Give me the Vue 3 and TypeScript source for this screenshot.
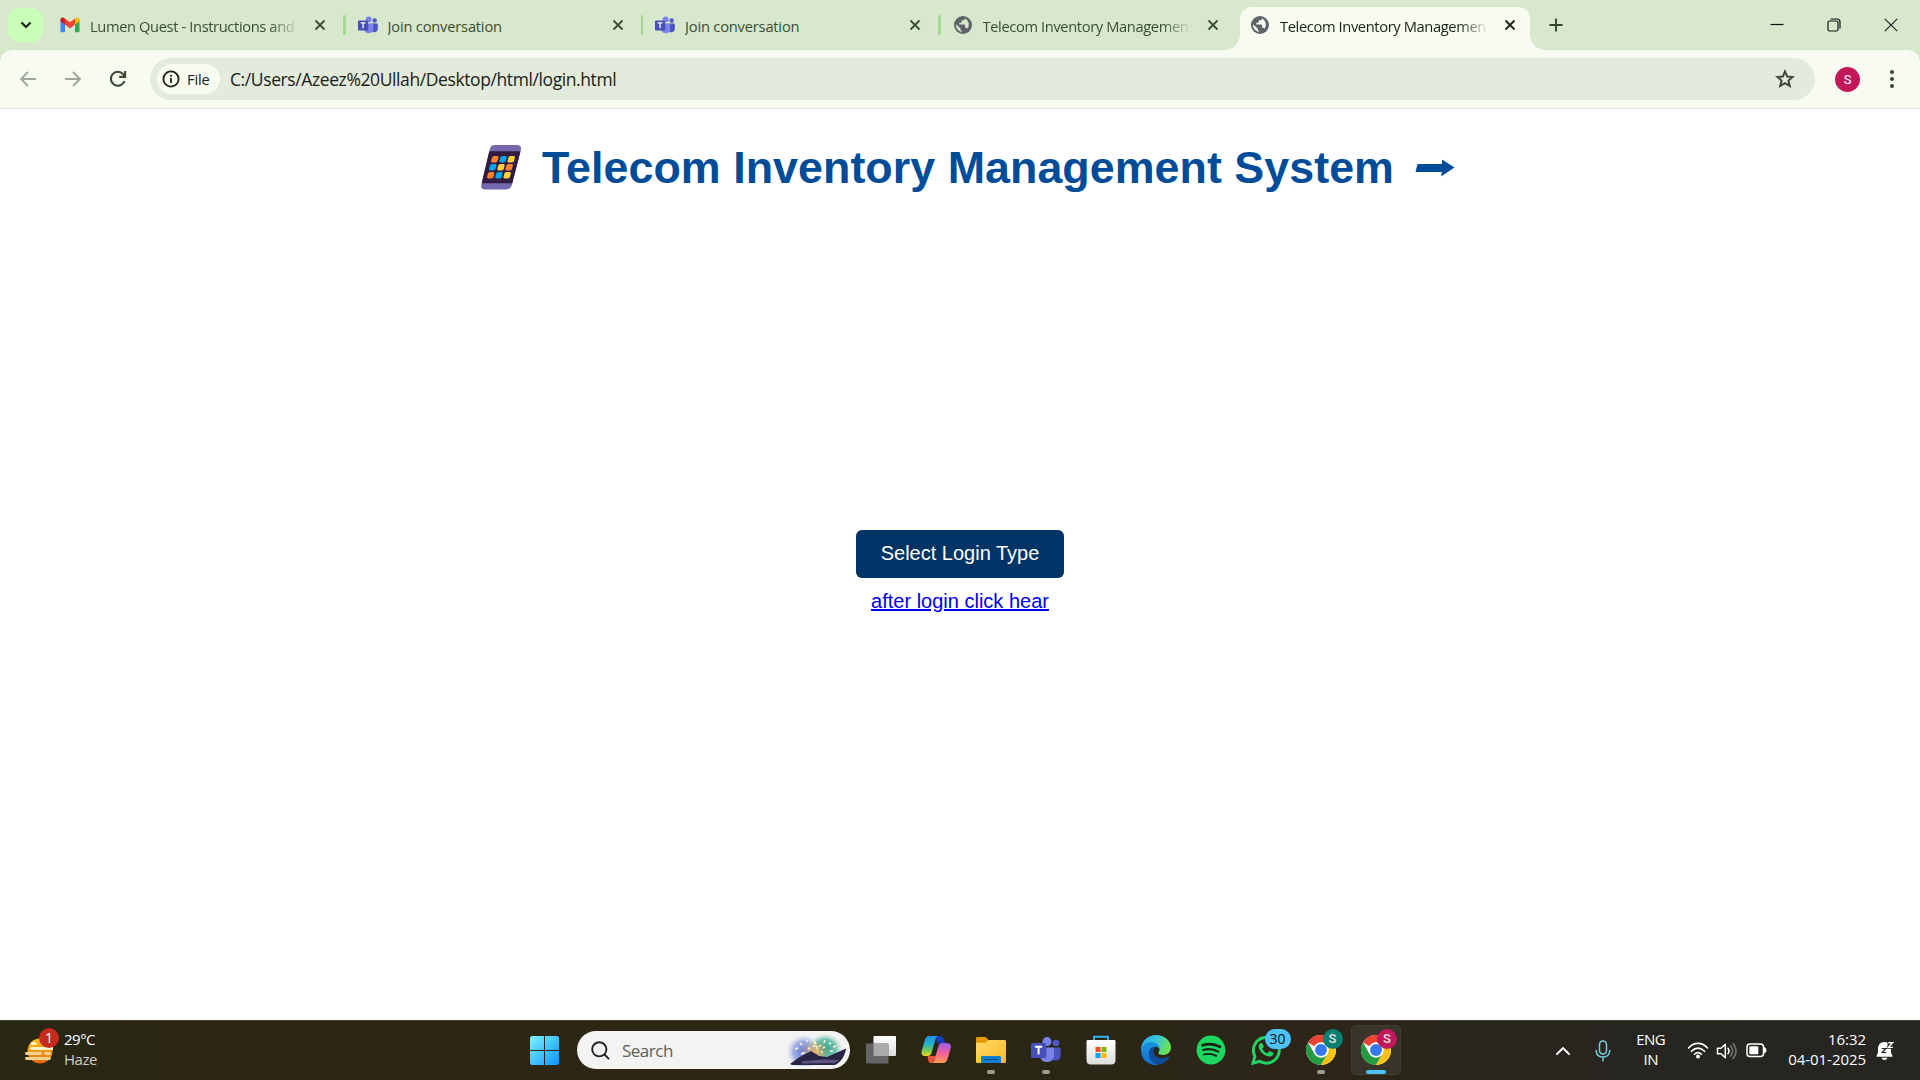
<script setup lang="ts">
interface Tab {
  title: string
  icon: 'gmail' | 'teams' | 'globe'
  active?: boolean
  separator?: boolean
  faded?: boolean
}

const tabs: Tab[] = [
  { title: 'Lumen Quest - Instructions and', icon: 'gmail', separator: true, faded: true },
  { title: 'Join conversation', icon: 'teams', separator: true },
  { title: 'Join conversation', icon: 'teams', separator: true },
  { title: 'Telecom Inventory Managemen', icon: 'globe', faded: true },
  { title: 'Telecom Inventory Managemen', icon: 'globe', active: true, faded: true },
]

const dialTiles = ['o', 'b', 'y', 'b', 'y', 'o', 'o', 'b', 'y']
const tileColours: Record<string, string> = { o: '#ff822d', b: '#00a6ed', y: '#ffd03b' }

const chromeWindows = [
  { badge: '#0b7f72', active: false },
  { badge: '#c2185b', active: true },
]
</script>

<template>
  <div class="screen">
    <svg class="defs" width="0" height="0">
      <defs>
        <linearGradient id="win" x1="0" y1="0" x2="1" y2="1">
          <stop offset="0" stop-color="#7df3ff" /><stop offset="1" stop-color="#0a94ff" />
        </linearGradient>
        <linearGradient id="sun" x1="0" y1="0" x2="0" y2="1">
          <stop offset="0" stop-color="#ffc61a" /><stop offset="1" stop-color="#e9650f" />
        </linearGradient>
        <linearGradient id="copA" x1="0" y1="0" x2="0" y2="1">
          <stop offset="0" stop-color="#1e8fec" /><stop offset=".4" stop-color="#23b3c7" />
          <stop offset=".75" stop-color="#7cc84a" /><stop offset="1" stop-color="#f7d21c" />
        </linearGradient>
        <linearGradient id="copB" x1="0" y1="0" x2="0" y2="1">
          <stop offset="0" stop-color="#a259ee" /><stop offset=".5" stop-color="#f0609c" /><stop offset="1" stop-color="#ff9d55" />
        </linearGradient>
        <linearGradient id="fold" x1="0" y1="0" x2="1" y2="1">
          <stop offset="0" stop-color="#ffda67" /><stop offset="1" stop-color="#fbb929" />
        </linearGradient>
        <linearGradient id="bag" x1="0" y1="0" x2="0" y2="1">
          <stop offset="0" stop-color="#fff" /><stop offset="1" stop-color="#dcdcdc" />
        </linearGradient>
        <linearGradient id="edgeTop" x1="0" y1="0" x2="1" y2=".35">
          <stop offset="0" stop-color="#2aa9e6" /><stop offset=".5" stop-color="#35c1e0" /><stop offset="1" stop-color="#6be255" />
        </linearGradient>
        <linearGradient id="edgeLow" x1="0" y1="0" x2="0" y2="1">
          <stop offset="0" stop-color="#1a93e0" /><stop offset="1" stop-color="#0f6fd0" />
        </linearGradient>
        <radialGradient id="glowA"><stop offset="0" stop-color="#5c75d6" /><stop offset=".6" stop-color="#8d9ee0" stop-opacity=".8" /><stop offset="1" stop-color="#cdd4f0" stop-opacity="0" /></radialGradient>
        <radialGradient id="glowB"><stop offset="0" stop-color="#2fa58c" /><stop offset=".6" stop-color="#58b9a4" stop-opacity=".85" /><stop offset="1" stop-color="#c9e6df" stop-opacity="0" /></radialGradient>
        <radialGradient id="glowC"><stop offset="0" stop-color="#f3b06a" /><stop offset="1" stop-color="#d99b6a" stop-opacity="0" /></radialGradient>
        <symbol id="teams" viewBox="0 0 30 27">
          <circle cx="25" cy="6" r="3.3" fill="#5059c9" />
          <path d="M20 10.500h8.200a1.500 1.500 0 0 1 1.500 1.500v6.500c0 3-2 5-5 5h-3z" fill="#4b53bc" />
          <circle cx="16" cy="4.600" r="4.500" fill="#7b83eb" />
          <path d="M9 10.500h12.500a1.500 1.500 0 0 1 1.500 1.500v7.500a7.200 7.200 0 0 1-14 0z" fill="#7b83eb" />
          <path d="M9 10.500h7v11H9.200z" fill="#000" opacity=".15" />
          <rect x="0" y="6" width="15" height="15" rx="1.500" fill="#464eb8" />
          <path d="M4 9.700h7.200M7.600 9.700V17.500" stroke="#fff" stroke-width="1.900" />
        </symbol>
        <symbol id="chrome" viewBox="0 0 48 48">
          <circle cx="24" cy="24" r="24" fill="#fff" />
          <path d="M3.200 12A24 24 0 0 1 44.800 12H24A12 12 0 0 0 13.600 18z" fill="#e94335" />
          <path d="M3.200 12A24 24 0 0 0 24 48L34.400 30A12 12 0 0 1 13.600 30z" fill="#249a41" />
          <path d="M44.800 12A24 24 0 0 1 24 48L34.400 30A12 12 0 0 0 24 12z" fill="#fbc116" />
          <circle cx="24" cy="24" r="12" fill="#fff" />
          <circle cx="24" cy="24" r="9.500" fill="#3478ec" />
        </symbol>
      </defs>
    </svg>

    <header class="tabstrip">
      <button class="tab-search">
        <svg width="12" height="8" viewBox="0 0 12 8"><path d="M1.500 1.500 6 6l4.500-4.500" fill="none" stroke="#12210d" stroke-width="2.200" /></svg>
      </button>
      <div class="tabs">
        <div v-for="(tab, i) in tabs" :key="i" class="tab" :class="{ active: tab.active }">
          <svg v-if="tab.icon === 'gmail'" class="favicon" viewBox="0 0 20 20">
            <path d="M.5 4.500v11.500c0 .8.500 1.300 1.300 1.300H5V8z" fill="#4285f4" />
            <path d="M19.500 4.500v11.500c0 .8-.5 1.300-1.300 1.300H15V8z" fill="#34a853" />
            <path d="M15 4.600v5l4.500-3V4.700c0-2-2.500-2.900-4.100-1.700z" fill="#fbbc04" />
            <path d="M5 4.600v5L.5 6.600V4.700C.5 2.700 3 1.800 4.600 3z" fill="#c5221f" />
            <path d="M5 3.500 10 7.300l5-3.800v6.100l-5 3.800-5-3.800z" fill="#ea4335" />
          </svg>
          <svg v-else-if="tab.icon === 'teams'" class="favicon"><use href="#teams" y="0.500" /></svg>
          <svg v-else class="favicon" viewBox="0 0 20 20">
            <circle cx="10" cy="10" r="9" fill="#5f6368" />
            <path d="M3 9.200 7.600 13.500v1c0 .8.600 1.400 1.400 1.400v1.200A7.200 7.200 0 0 1 3 9.200zM12 3.200v.5c0 .9-.8 1.500-1.600 1.500H8.800v1.600c0 .5-.4.900-.9.900H6.300v1.700h4.900c.5 0 .9.400.9.800v2.500h.9c.7 0 1.300.5 1.500 1.100A7.300 7.300 0 0 0 12 3.200z" :fill="tab.active ? '#f8fbf2' : '#d8e8cd'" />
          </svg>
          <span class="tab-title" :class="{ faded: tab.faded }">{{ tab.title }}</span>
          <svg class="tab-close" width="12" height="12" viewBox="0 0 12 12"><path d="M1.500 1.500 10.500 10.500M10.500 1.500 1.500 10.500" stroke="currentColor" stroke-width="1.800" /></svg>
          <i v-if="tab.separator" class="separator" />
        </div>
      </div>
      <svg class="new-tab" width="14" height="14" viewBox="0 0 14 14"><path d="M7 .5v13M.5 7h13" stroke="#33452c" stroke-width="1.900" /></svg>
      <div class="window-controls">
        <svg width="14" height="14" viewBox="0 0 14 14"><path d="M.5 6.500h13" stroke="#111" stroke-width="1.200" /></svg>
        <svg width="14" height="14" viewBox="0 0 14 14" fill="none" stroke="#111" stroke-width="1.200"><rect x="1" y="3" width="10" height="10" rx="1.500" /><path d="M3.500 1H10a3 3 0 0 1 3 3v6.500" /></svg>
        <svg width="14" height="14" viewBox="0 0 14 14"><path d="M.8.800 13.200 13.200M13.200.800.800 13.200" stroke="#222" stroke-width="1.200" /></svg>
      </div>
    </header>

    <nav class="toolbar">
      <svg class="nav-icon" viewBox="0 0 20 20" fill="none" stroke="#9fa79a" stroke-width="1.900"><path d="M18 10H3.500M10 3 3 10l7 7" /></svg>
      <svg class="nav-icon" viewBox="0 0 20 20" fill="none" stroke="#9fa79a" stroke-width="1.900"><path d="M2 10h14.500M10 3l7 7-7 7" /></svg>
      <svg class="nav-icon" viewBox="0 0 20 20" fill="none" stroke="#374831" stroke-width="2.100"><path d="M16.500 12A7 7 0 1 1 15.200 5.200L17 7.500" /><path d="M17.100 2V7.900H11.200" /></svg>
      <div class="omnibox">
        <span class="chip">
          <svg width="18" height="18" viewBox="0 0 18 18"><circle cx="9" cy="9" r="7.600" fill="none" stroke="#1b2118" stroke-width="1.800" /><path d="M9 8v5M9 4.800v1.900" stroke="#1b2118" stroke-width="1.800" /></svg>
          <b>File</b>
        </span>
        <span class="url">C:/Users/Azeez%20Ullah/Desktop/html/login.html</span>
        <svg class="star" width="20" height="20" viewBox="0 0 20 20"><path d="M10 2.400l2.150 5.100 5.500.45-4.200 3.600 1.300 5.400L10 14.050 5.250 16.950l1.300-5.400-4.200-3.600 5.500-.45z" fill="none" stroke="#3f4a3b" stroke-width="2" /></svg>
      </div>
      <span class="avatar">S</span>
      <svg class="menu" width="6" height="20" viewBox="0 0 6 20" fill="#33452c"><circle cx="3" cy="3" r="2" /><circle cx="3" cy="10" r="2" /><circle cx="3" cy="17" r="2" /></svg>
    </nav>

    <main class="page">
      <h1>
        <svg width="42" height="46" viewBox="0 0 42 46">
          <path d="M14.500 1H37c3 0 4.600 2 3.900 4.600L31.800 41c-.8 3-3 4.500-5.800 4.500H4.500C2 45.500.6 43.600 1.300 41L9.800 5.200C10.500 2.600 12 1 14.500 1z" fill="#7668ac" />
          <path d="M9.300 7.200H40.500L32.300 39.300H1.700z" fill="#321b41" />
          <g transform="matrix(1 0 -.255 1 11.400 12)">
            <rect v-for="(c, i) in dialTiles" :key="i" :x="1 + (i % 3) * 8.200" :y="Math.floor(i / 3) * 8" width="6.500" height="6.500" rx="1.700" :fill="tileColours[c]" />
          </g>
        </svg>
        <span class="heading-text">Telecom Inventory Management System</span>
        <svg class="arrow" width="40" height="18" viewBox="0 0 40 18"><path d="M2.500 5H27V.5L39.500 8.500 26 17.500 27 13H.5z" fill="#004c99" /></svg>
      </h1>
      <section class="login">
        <button class="login-button">Select Login Type</button>
        <a href="#" class="login-link">after login click hear</a>
      </section>
    </main>

    <footer class="taskbar">
      <div class="weather">
        <div class="weather-icon">
          <svg width="28" height="28" viewBox="0 0 28 28">
            <circle cx="15" cy="14" r="12.500" fill="url(#sun)" />
            <g stroke="#fff1c4" stroke-width="2.900" stroke-linecap="round"><path d="M7 6.500h3M6.500 11.500h22" /><path d="M1.500 16.500h14M20.500 16.500h4M1.500 21.500h23" stroke="#f1d392" /></g>
          </svg>
          <span class="alert">1</span>
        </div>
        <div class="weather-text"><span>29°C</span><span class="dim">Haze</span></div>
      </div>

      <div class="apps">
        <svg class="start" width="29" height="29" viewBox="0 0 29 29"><path d="M1.500 0H14v14H0V1.500zM15 0h12.500L29 1.500V14H15zM0 15h14v14H1.500L0 27.500zM15 15h14v12.500L27.500 29H15z" fill="url(#win)" /></svg>
        <div class="search">
          <svg width="19" height="19" viewBox="0 0 19 19" fill="none" stroke="#222" stroke-width="1.900" stroke-linecap="round"><circle cx="8.300" cy="8.300" r="7.100" /><path d="M13.500 13.500 17.600 17.600" /></svg>
          <span>Search</span>
          <svg class="highlight" width="60" height="32" viewBox="0 0 60 32">
            <ellipse cx="17" cy="18" rx="18" ry="18" fill="url(#glowA)" />
            <ellipse cx="38" cy="15" rx="18" ry="16" fill="url(#glowB)" />
            <ellipse cx="28" cy="18" rx="15" ry="12" fill="url(#glowC)" />
            <path d="M3 30 11 24 24 17l8 5 8 1L59 14.500C58 22 54 28 48 31H5z" fill="#292344" />
            <path d="M14 27.500 35 25.500l17 .5-4 3-32 .5z" fill="#766a98" opacity=".7" />
            <path d="M8 15l3-1M14 20l4-1.500M13 9l2 2M20 6v2M28 7l1 3M38 6l-1 3M44 9l-2 1M49 12l-3 1M43 17h3M21 14l2 1M38 13l-2 1M35 17v2" stroke="#fff9d5" stroke-width="1.400" />
            <path d="M26 6l2 5 2 2 1 5M26 12l4 1 5-2" stroke="#fff2ba" stroke-width="1.500" stroke-dasharray="2 1" fill="none" />
          </svg>
        </div>

        <div class="app">
          <svg width="30" height="30" viewBox="0 0 30 30"><rect x="7.500" y="1" width="22.500" height="20" rx="1" fill="url(#bag)" /><rect x="0" y="8.500" width="22.500" height="20" rx="1" fill="#646464" /><path d="M7.500 8.500h15V21h-15z" fill="#aaa" /></svg>
        </div>
        <div class="app">
          <svg width="30" height="30" viewBox="0 0 30 30">
            <path d="M15 1h4.500c1.500 0 2.300.8 2.800 2.200L24 8h-8z" fill="#153ec0" />
            <path d="M6.500 21H15l-3 5.500c-.5 1-1.100 1.500-2.200 1.500-1.400 0-2-.7-2.400-2z" fill="#e6563d" />
            <path d="M8 1h9.500C15 1.500 14.500 4 13.800 6.500L10.500 18c-.7 2.200-1.800 3-3.800 3H4C.8 21 0 18.500.8 15.500L4 4.800C4.800 2.200 5.800 1 8 1z" fill="url(#copA)" />
            <path d="M22 28H10c2.500-.5 3-2 3.800-4.500L17.500 11c.7-2.200 1.800-3 3.800-3H26c3.500 0 4.500 2.500 3.600 5.500L26.500 24c-.8 2.700-2.300 4-4.500 4z" fill="url(#copB)" />
          </svg>
        </div>
        <div class="app">
          <svg width="30" height="30" viewBox="0 0 30 30"><path d="M0 3.500C0 2.500.7 2 1.500 2h7.300c.7 0 1.200.2 1.700.7L12.500 5v5H0z" fill="#e29a09" /><path d="M0 7.800h9.500L12.500 5h16c.9 0 1.500.6 1.500 1.500v20c0 1-.6 1.500-1.500 1.500h-27C.6 28 0 27.500 0 26.500z" fill="url(#fold)" /><path d="M5 28v-5.500C5 21.500 5.700 21 6.500 21h17c.9 0 1.500.6 1.500 1.500V28z" fill="#117ed0" /><path d="M8.500 24.500h13" stroke="#07548f" stroke-width="1.200" /></svg>
          <i class="running" />
        </div>
        <div class="app">
          <svg width="30" height="27"><use href="#teams" /></svg>
          <i class="running" />
        </div>
        <div class="app">
          <svg width="30" height="30" viewBox="0 0 30 30"><path d="M8 6V1.700h14V6" fill="none" stroke="#30b4ea" stroke-width="1.900" /><path d="M.5 6.500c0-1 .5-1.500 1.300-1.500h26.400c.8 0 1.300.5 1.300 1.500V25c0 3-1.500 4.500-4.300 4.500H4.800C2 29.500.5 28 .5 25z" fill="url(#bag)" /><rect x="9.500" y="12" width="5" height="5" fill="#f25022" /><rect x="15.500" y="12" width="5" height="5" fill="#7fba00" /><rect x="9.500" y="18" width="5" height="5" fill="#00a4ef" /><rect x="15.500" y="18" width="5" height="5" fill="#ffb900" /></svg>
        </div>
        <div class="app">
          <svg width="30" height="30" viewBox="0 0 30 30">
            <path d="M0 15C0 6.500 6.500 0 15 0s15 6 15 12.500c0 4.500-3.500 7.500-8 7.500-3 0-4.700-1-4.700-2 0-.8 1.200-1.200 1.200-3.500 0-3-3.200-5.500-7.500-5.500C5.500 9 1 12 0 15z" fill="url(#edgeTop)" />
            <path d="M0 15c.5-5 5-8 10.500-8 4.500 0 8 2.500 8 7-1-1.800-2.800-2.500-4.800-2.300C9.500 12 7.500 16 8.500 20.500 9.500 25 13 28.500 17.500 29.800 8 31.500 0 24.500 0 15z" fill="url(#edgeLow)" />
            <path d="M12.500 12c-5 2.500-6 8-3 12.700 2.500 4 6.500 5.600 10.500 4.500 3.500-1 6.500-3.500 8-6.200.5-.9-.3-1.400-1.100-1-5.500 2.500-14 1-14.400-5.300-.1-2 .7-3.300 2-4.500-.7-.3-1.300-.4-2-.2z" fill="#0d4d99" />
          </svg>
        </div>
        <div class="app">
          <svg width="30" height="30" viewBox="0 0 30 30"><circle cx="15" cy="15" r="14.400" fill="#1ed760" /><g fill="none" stroke="#17200f" stroke-linecap="round"><path d="M6.500 10.200c6-1.700 12.500-1.200 17.500 1.700" stroke-width="2.700" /><path d="M7.200 15c5.200-1.400 10.700-.8 15 1.600" stroke-width="2.200" /><path d="M7.800 19.500c4.300-1.100 9-.6 12.500 1.400" stroke-width="1.800" /></g></svg>
        </div>
        <div class="app">
          <svg width="30" height="30" viewBox="0 0 30 30"><path d="M2 28.200 3.900 21.200A12.900 12.900 0 1 1 8.700 26.300z" fill="none" stroke="#24d366" stroke-width="2.900" /><path d="M9.300 8.300c.5-.5 1.700-.6 2.100.2l1.200 2.800c.2.600-.1 1.100-1.300 2.400 1.200 2.300 2.900 3.800 5.100 4.700l1.500-1.800c.4-.5.800-.5 1.300-.3l2.700 1.300c.7.400.6.900.4 1.700-.6 1.700-2.700 2.500-4.300 2.200-4.900-.9-8.600-4.200-10.100-8.500-.6-1.700.2-3.700 1.400-4.700z" fill="#24d366" /></svg>
          <span class="count">30</span>
        </div>
        <div v-for="(win, i) in chromeWindows" :key="i" class="app" :class="{ focused: win.active }">
          <svg width="30" height="30"><use href="#chrome" /></svg>
          <span class="profile" :style="{ background: win.badge }">S</span>
          <i class="running" />
        </div>
      </div>

      <div class="tray">
        <svg width="14" height="9" viewBox="0 0 14 9"><path d="M1 8 7 2l6 6" fill="none" stroke="#fff" stroke-width="1.900" stroke-linecap="round" /></svg>
        <svg class="mic" width="16" height="22" viewBox="0 0 16 22" fill="none" stroke="#75cfe0" stroke-width="1.500" stroke-linecap="round"><rect x="4.500" y="1" width="7" height="13" rx="3.500" /><path d="M1.200 10.500c0 4 2.600 6.500 6.800 6.500s6.800-2.500 6.800-6.500M8 17v4" /></svg>
        <div class="lang"><span>ENG</span><span>IN</span></div>
        <svg class="wifi" width="22" height="17" viewBox="0 0 22 17" fill="none" stroke="#fff" stroke-width="1.600" stroke-linecap="round"><path d="M1.500 6C7-.2 15-.2 20.500 6M4.500 9.300c4-4.200 9-4.200 13 0M7.500 12.300c2.300-2.300 4.700-2.300 7 0" /><circle cx="11" cy="14.500" r="1.200" fill="#fff" /></svg>
        <svg class="sound" width="22" height="18" viewBox="0 0 22 18" fill="none" stroke="#fff" stroke-width="1.500" stroke-linejoin="round" stroke-linecap="round"><path d="M1.500 6.200H5l4.300-4v13.600L5 11.800H1.500zM12 6.200c1.300 1.700 1.300 3.900 0 5.600" /><path d="M14.500 3.800c2.800 3 2.800 7.400 0 10.400M17 1.500c4 4.300 4 10.700 0 15" stroke="#77756f" /></svg>
        <svg class="battery" width="21" height="15" viewBox="0 0 21 15"><rect x="1" y="1" width="16.500" height="12.500" rx="3" fill="none" stroke="#fff" stroke-width="1.500" /><rect x="3.300" y="3.300" width="9" height="8" rx="1" fill="#fff" /><path d="M18.500 4.500c2 .3 2 5 0 5.500z" fill="#fff" stroke="#fff" /></svg>
        <div class="clock"><span>16:32</span><span>04-01-2025</span></div>
        <svg class="bell" width="18" height="20" viewBox="0 0 18 20"><path d="M.5 15.200c0-.5.200-.8.400-1.200L2 11.500V7.600C2 3.800 4.700 1 8.500 1c1 0 2 .2 3 .6v4.900h3.500v5l1.100 2.500c.2.400.4.700.4 1.200 0 .4-.3.600-.7.600H1.200c-.4 0-.7-.2-.7-.6zM5.700 16.800h5.600c-.4 3-5.200 3-5.600 0z" fill="#fff" /><path d="M5.800 7.500h4L6.200 11.500h4.200" fill="none" stroke="#26241f" stroke-width="1.200" /><path d="M12.300 1.800h4.200l-4 4.600h4.500" fill="none" stroke="#26241f" stroke-width="2.600" /><path d="M12.300 1.800h4.200l-4 4.600h4.500" fill="none" stroke="#fff" stroke-width="1.400" /></svg>
      </div>
    </footer>
  </div>
</template>

<style>
body {
  overflow: hidden;
}
</style>

<style scoped>
.screen {
  display: flex;
  flex-direction: column;
  width: 1920px;
  height: 1080px;
  overflow: hidden;
  background: #fff;
  font-family: "Open Sans", "Noto Sans", sans-serif;
}
.screen * { box-sizing: border-box; }
.defs { position: absolute; }
svg { display: block; flex: none; }

.tabstrip {
  display: flex;
  flex: none;
  align-items: center;
  height: 50px;
  background: #d8e8cd;
}
.tab-search {
  display: grid;
  place-items: center;
  width: 35px;
  height: 34px;
  margin-left: 8px;
  padding: 0;
  border: 0;
  border-radius: 12px;
  background: #c9ffb8;
}
.tabs {
  display: flex;
  align-self: stretch;
  margin-left: 5px;
}
.tab {
  position: relative;
  display: flex;
  align-items: center;
  width: 297.500px;
  height: 50px;
  padding-left: 12px;
  color: #3b4e33;
}
.favicon { width: 20px; height: 20px; }
.tab-title {
  width: 209px;
  margin-left: 10px;
  padding-top: 1px;
  overflow: hidden;
  white-space: nowrap;
  font-size: 14.700px;
  letter-spacing: -0.2px;
  line-height: 20px;
}
.tab-title.faded {
  letter-spacing: -0.38px;
  -webkit-mask-image: linear-gradient(to right, #000 86%, transparent);
  mask-image: linear-gradient(to right, #000 86%, transparent);
}
.tab-close { margin-left: 15px; }
.separator {
  position: absolute;
  right: 0;
  top: 15px;
  width: 2.500px;
  height: 20px;
  border-radius: 2px;
  background: #a3d895;
}
.tab.active {
  width: 290px;
  height: 43px;
  margin-top: 7px;
  margin-left: 2px;
  padding-left: 10px;
  padding-bottom: 7px;
  border-radius: 12px 12px 0 0;
  background: #f8fbf2;
  color: #1b2218;
}
.tab.active::before,
.tab.active::after {
  content: "";
  position: absolute;
  bottom: 0;
  width: 15px;
  height: 15px;
}
.tab.active::before {
  left: -15px;
  background: radial-gradient(circle at 0 0, transparent 14.500px, #f8fbf2 15px);
}
.tab.active::after {
  right: -15px;
  background: radial-gradient(circle at 100% 0, transparent 14.500px, #f8fbf2 15px);
}
.new-tab { margin-left: 18.500px; }
.window-controls {
  display: flex;
  gap: 43px;
  margin-left: auto;
  margin-right: 22px;
}

.toolbar {
  position: relative;
  display: flex;
  flex: none;
  align-items: center;
  height: 59px;
  padding-left: 18px;
  border-bottom: 1px solid #dae3d4;
  background:
    radial-gradient(circle at 100% 100%, #f8fbf2 11.500px, #d8e8cd 12px) 0 0 / 12px 12px no-repeat,
    radial-gradient(circle at 0 100%, #f8fbf2 11.500px, #d8e8cd 12px) 100% 0 / 12px 12px no-repeat,
    #f8fbf2;
}
.nav-icon { width: 20px; height: 20px; margin-right: 24.500px; }
.nav-icon:nth-child(2) { margin-right: 25px; }
.nav-icon:nth-child(3) { margin-right: 22.500px; }
.omnibox {
  display: flex;
  align-items: center;
  width: 1665px;
  height: 42px;
  padding: 0 20px 0 7px;
  border-radius: 21px;
  background: #e3ebdc;
}
.chip {
  display: flex;
  align-items: center;
  width: 63px;
  height: 30px;
  padding-left: 5px;
  border-radius: 15px;
  background: #f8fbf2;
}
.chip b {
  margin-left: 7px;
  color: #1b2118;
  font-size: 14.700px;
  font-weight: 500;
  letter-spacing: -0.2px;
}
.url {
  margin-left: 10px;
  color: #1b2118;
  font-size: 17.500px;
  letter-spacing: -0.4px;
}
.star { margin-left: auto; }
.avatar {
  display: grid;
  place-items: center;
  width: 25px;
  height: 25px;
  margin-left: 20px;
  border-radius: 50%;
  background: #c2185b;
  color: #fff;
  font: 13px Roboto, sans-serif;
}
.menu { margin-left: 29px; }

.page {
  display: flex;
  flex: 1;
  flex-direction: column;
  align-items: center;
}
h1 {
  display: flex;
  align-items: center;
  height: 52px;
  margin: 32px 0 0 15px;
  color: #004c99;
  font: bold 44.800px "Liberation Sans", Arial, sans-serif;
}
.heading-text {
  margin: 0 21px 0 20px;
  letter-spacing: 0.04px;
  white-space: nowrap;
}
.arrow { margin-top: 2px; }
.login {
  display: flex;
  flex-direction: column;
  align-items: center;
  margin-top: 337px;
  font-family: "Liberation Sans", Arial, sans-serif;
  font-size: 20px;
}
.login-button {
  width: 208px;
  height: 48px;
  padding: 0 0 2px;
  border: 0;
  border-radius: 6px;
  background: #003366;
  color: #fff;
  font: inherit;
}
.login-link {
  margin-top: 11px;
  color: #0000ee;
  line-height: 24px;
  text-decoration-thickness: 2px;
}

.taskbar {
  display: flex;
  flex: none;
  align-items: center;
  height: 60px;
  border-top: 1px solid #45443a;
  background: linear-gradient(to right, #282614, #2e2615 18%, #2a2614 50%, #2b2618 70%, #272520 85%, #262521);
  color: #fff;
  font-size: 15px;
}
.weather { display: flex; align-items: center; width: 530px; padding-left: 25px; }
.weather-icon { position: relative; }
.alert {
  position: absolute;
  top: -9px;
  left: 14px;
  width: 20px;
  height: 20px;
  border-radius: 50%;
  background: #c42b1c;
  font-size: 14px;
  line-height: 20px;
  text-align: center;
}
.weather-text,
.lang,
.clock {
  display: flex;
  flex-direction: column;
  padding-bottom: 4px;
  line-height: 20px;
  letter-spacing: -0.5px;
}
.lang { padding-bottom: 3px; }
.weather-text { margin-left: 11px; }
.dim { color: #cfcdc8; }
.apps { display: flex; align-items: center; }
.search {
  display: flex;
  align-items: center;
  width: 273px;
  height: 38px;
  margin: 0 3.500px 1px 18px;
  padding: 0 3px 0 14px;
  border-radius: 19px;
  background: #f3f3f1;
  color: #5d5d5b;
  font-size: 17px;
  letter-spacing: -0.5px;
}
.search span { margin-left: 12px; }
.highlight { margin-left: auto; }
.app {
  position: relative;
  display: grid;
  place-items: center;
  width: 55px;
  height: 50px;
  margin-bottom: 1px;
}
.running {
  position: absolute;
  bottom: 1px;
  left: 50%;
  width: 8px;
  height: 4px;
  margin-left: -4px;
  border-radius: 2px;
  background: #a09d95;
}
.focused { width: 50px; margin: 0 2.500px 1px; border: 1px solid #413e31; border-radius: 5px; background: #38342a; }
.focused .running { bottom: 0; width: 20px; margin-left: -10px; background: #4cc2ff; }
.profile {
  position: absolute;
  top: 4px;
  right: 6px;
  width: 20px;
  height: 20px;
  border-radius: 50%;
  color: #e8dfe0;
  font: 500 13px/20px Roboto, sans-serif;
  text-align: center;
}
.focused .profile { top: 3px; right: 3px; }
.count {
  position: absolute;
  top: 4px;
  right: 3px;
  width: 26px;
  height: 20px;
  border-radius: 10px;
  background: #4cc2ff;
  color: #111;
  font-size: 14px;
  line-height: 20px;
  text-align: center;
}
.tray { display: flex; align-items: center; margin-left: auto; padding-right: 26px; }
.mic { margin-left: 25px; }
.lang { align-items: center; margin-left: 25px; }
.wifi { margin-left: 22px; }
.sound { margin-left: 7px; }
.battery { margin-left: 8px; }
.clock { align-items: flex-end; margin-left: 21px; letter-spacing: -0.05px; }
.bell { margin-left: 10px; }
</style>
